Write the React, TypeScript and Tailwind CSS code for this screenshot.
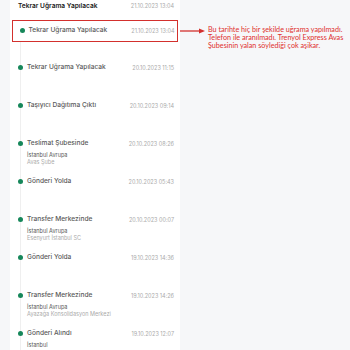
const events = [
  { title: 'Tekrar Uğrama Yapılacak', date: '20.10.2023 11:15', sub: [] as string[] },
  { title: 'Taşıyıcı Dağıtıma Çıktı', date: '20.10.2023 09:14', sub: [] },
  { title: 'Teslimat Şubesinde', date: '20.10.2023 08:26', sub: ['İstanbul Avrupa', 'Avas Şube'] },
  { title: 'Gönderi Yolda', date: '20.10.2023 05:43', sub: [] },
  { title: 'Transfer Merkezinde', date: '20.10.2023 00:07', sub: ['İstanbul Avrupa', 'Esenyurt İstanbul SC'] },
  { title: 'Gönderi Yolda', date: '19.10.2023 14:36', sub: [] },
  { title: 'Transfer Merkezinde', date: '19.10.2023 14:26', sub: ['İstanbul Avrupa', 'Ayazağa Konsolidasyon Merkezi'] },
  { title: 'Gönderi Alındı', date: '19.10.2023 12:07', sub: ['İstanbul'] },
]

function Dot() {
  return <div className="-ml-[3px] w-[5px] h-[5px] rounded-full bg-[#16875a] shrink-0" />
}

export default function App() {
  return (
    <div
      className="w-[350px] h-[350px] bg-[#f6f7f9] flex overflow-hidden"
      style={{ fontFamily: 'Inter, "Noto Sans", sans-serif' }}
    >
      <div className="w-[10px] shrink-0" />

      {/* Tracking card */}
      <div className="w-[170px] shrink-0 bg-white">
        <div className="h-[20px] flex items-start justify-between pl-[8px] pr-[6px]">
          <span className="text-[6.6px] leading-[12px] font-semibold text-[#222]">Tekrar Uğrama Yapılacak</span>
          <span className="text-[5.5px] leading-[12px] text-[#aaa]">21.10.2023 13:04</span>
        </div>

        <div className="mx-[2px] h-[22px] border-[1.5px] border-[#d3302d] flex items-center justify-between pl-[6.5px] pr-[2.5px]">
          <div className="flex items-center gap-[4px] pl-[3px]">
            <div className="w-[5px] h-[5px] rounded-full bg-[#16875a] -ml-[3px]" />
            <span className="text-[6.6px] font-medium text-[#5a5a5a]">Tekrar Uğrama Yapılacak</span>
          </div>
          <span className="text-[5.5px] text-[#aaa]">21.10.2023 13:04</span>
        </div>

        <div className="ml-[10px] border-l border-[#efefef] pt-[20px] pb-[20px]">
          {events.map((e, i) => (
            <div key={i}>
              <div className="h-[12px] flex items-center justify-between pr-[6px]">
                <div className="flex items-center gap-[4px]">
                  <Dot />
                  <span className="text-[6.6px] font-medium text-[#5a5a5a]">{e.title}</span>
                </div>
                <span className="text-[5.5px] text-[#aaa]">{e.date}</span>
              </div>
              <div className="h-[26px] pt-[2px] pl-[6px]">
                {e.sub.map((s, j) => (
                  <div
                    key={j}
                    className={`text-[5.5px] leading-[6.5px] ${j === 0 ? 'text-[#555]' : 'text-[#aaa]'}`}
                  >
                    {s}
                  </div>
                ))}
              </div>
            </div>
          ))}
        </div>
      </div>

      {/* Annotation */}
      <div className="flex items-start pt-[26px] gap-[2px]">
        <svg width="26" height="10" viewBox="0 0 26 10" className="shrink-0">
          <line x1="0" y1="5" x2="20" y2="5" stroke="#d3302d" strokeWidth="1.3" />
          <path d="M19 2.5 L25 5 L19 7.5 Z" fill="#d3302d" />
        </svg>
        <p
          className="text-[7.2px] leading-[8.2px] text-[#e0302e] whitespace-nowrap"
          style={{ fontFamily: 'Lato, "Open Sans", sans-serif' }}
        >
          Bu tarihte hiç bir şekilde uğrama yapılmadı.
          <br />
          Telefon ile aranılmadı. Trenyol Express Avas
          <br />
          Şubesinin yalan söylediği çok aşikar.
        </p>
      </div>
    </div>
  )
}
